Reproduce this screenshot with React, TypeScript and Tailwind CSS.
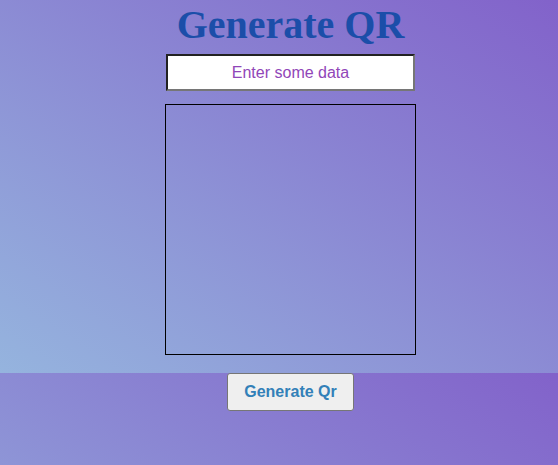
export default function App() {
  return (
    <div
      className="w-full h-[465px] bg-[linear-gradient(to_top_right,#95b4de,#8262ca)] bg-[length:100%_373px] bg-repeat-y pl-[23px] flex flex-col items-center"
      style={{ fontFamily: '"Liberation Sans", Arial, sans-serif' }}
    >
      <h1
        className="mt-[2px] text-[40px] leading-[46px] font-bold text-[#1b4ea9]"
        style={{ fontFamily: '"Liberation Serif", "Times New Roman", serif' }}
      >
        Generate QR
      </h1>
      <input
        type="text"
        placeholder="Enter some data"
        className="mt-[6px] w-[249px] h-[37px] bg-white border-2 border-t-[#222] border-l-[#222] border-b-[#767676] border-r-[#767676] text-center text-[16px] placeholder:text-[#9146b8] outline-none"
      />
      <div className="mt-[13px] w-[251px] h-[251px] border border-black"></div>
      <button className="mt-[18px] h-[38px] px-[16px] bg-[#efefef] border border-[#767676] rounded-[3px] text-[16px] font-bold text-[#3280b8]">
        Generate Qr
      </button>
    </div>
  );
}
